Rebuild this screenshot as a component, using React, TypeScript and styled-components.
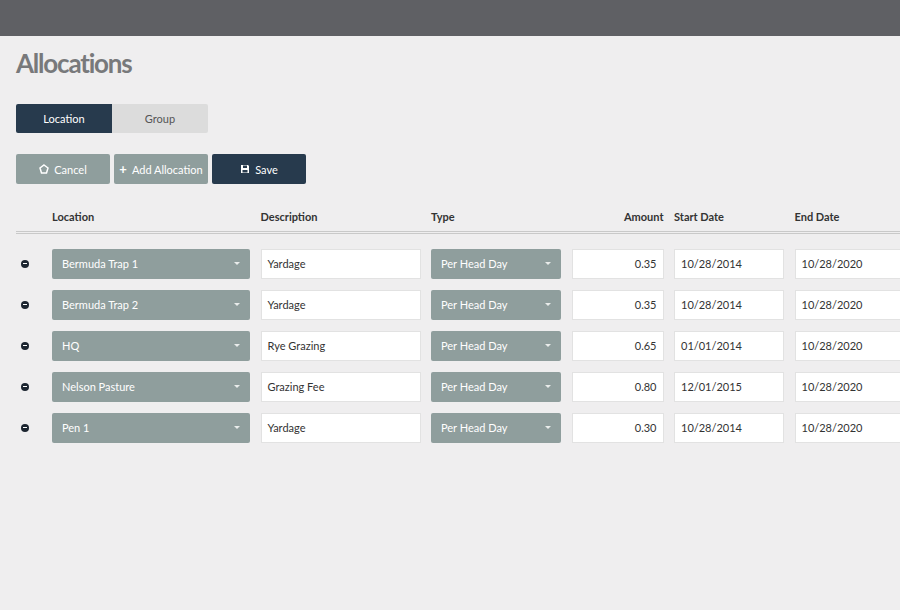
import styled, { createGlobalStyle } from 'styled-components';

const Global = createGlobalStyle`
  body { margin: 0; background: #efeeef; font-family: Lato, "Open Sans", sans-serif; overflow: hidden; }
`;

const rows = [
  { loc: 'Bermuda Trap 1', desc: 'Yardage', amt: '0.35', start: '10/28/2014', end: '10/28/2020' },
  { loc: 'Bermuda Trap 2', desc: 'Yardage', amt: '0.35', start: '10/28/2014', end: '10/28/2020' },
  { loc: 'HQ', desc: 'Rye Grazing', amt: '0.65', start: '01/01/2014', end: '10/28/2020' },
  { loc: 'Nelson Pasture', desc: 'Grazing Fee', amt: '0.80', start: '12/01/2015', end: '10/28/2020' },
  { loc: 'Pen 1', desc: 'Yardage', amt: '0.30', start: '10/28/2014', end: '10/28/2020' },
];

const TopBar = styled.div`height: 36px; background: #5f6064;`;
const Page = styled.div`padding: 0 0 0 16px; width: 920px;`;
const Title = styled.h1`
  margin: 0; padding-top: 11px; height: 57px; box-sizing: border-box;
  font-size: 26px; font-weight: 700; color: #78797b; letter-spacing: -1.2px;
`;
const Tabs = styled.div`display: flex; margin-top: 11px;`;
const Tab = styled.div<{ $active?: boolean }>`
  width: 96px; height: 29px; display: flex; align-items: center; justify-content: center;
  font-size: 11px; background: ${p => (p.$active ? '#273a4d' : '#dcdcdc')};
  color: ${p => (p.$active ? '#fff' : '#555')};
  border-radius: ${p => (p.$active ? '2px 0 0 2px' : '0 2px 2px 0')};
`;
const Actions = styled.div`display: flex; gap: 4px; margin-top: 21px;`;
const Btn = styled.div<{ $dark?: boolean; $w: number }>`
  width: ${p => p.$w}px; height: 30px; display: flex; align-items: center; justify-content: center; gap: 5px;
  font-size: 11px; color: #fff; border-radius: 2px;
  background: ${p => (p.$dark ? '#273a4d' : '#8f9e9d')};
`;
const Grid = styled.div`
  display: grid; margin-top: 26px;
  grid-template-columns: 25.5px 198px 160px 130px 92px 110px 110px;
  column-gap: 10.5px; align-items: center;
`;
const Head = styled.div<{ $right?: boolean }>`
  font-size: 11px; font-weight: 700; color: #333; height: 14px; padding-bottom: 7px;
  text-align: ${p => (p.$right ? 'right' : 'left')};
`;
const Rule = styled.div`
  grid-column: 1 / -1; height: 1px; border-top: 1px solid #c9c9c9; border-bottom: 1px solid #c9c9c9;
  margin-bottom: 9px; margin-right: -40px;
`;
const Minus = styled.div`
  width: 8px; height: 8px; border-radius: 50%; background: #1c2530; margin-left: 5px; position: relative;
  &::after { content: ''; position: absolute; left: 2px; right: 2px; top: 3.5px; height: 1px; background: #fff; }
`;
const Select = styled.div`
  height: 30px; margin: 5.5px 0; background: #8f9e9d; border-radius: 2px; color: #fff;
  font-size: 11px; display: flex; align-items: center; justify-content: space-between; padding: 0 10px;
  &::after { content: ''; border-left: 3px solid transparent; border-right: 3px solid transparent; border-top: 3px solid #fff; opacity: .8; }
`;
const Field = styled.div<{ $right?: boolean }>`
  height: 28px; background: #fff; border: 1px solid #e2e2e2; font-size: 11px; color: #333;
  display: flex; align-items: center; padding: 0 6px;
  justify-content: ${p => (p.$right ? 'flex-end' : 'flex-start')};
`;

export default function App() {
  return (
    <>
      <Global />
      <TopBar />
      <Page>
        <Title>Allocations</Title>
        <Tabs><Tab $active>Location</Tab><Tab>Group</Tab></Tabs>
        <Actions>
          <Btn $w={94}>
            <svg width="10" height="10" viewBox="0 0 10 10"><path d="M5 1 L9 4 L7.5 9 L2.5 9 L1 4 Z" fill="none" stroke="#fff" strokeWidth="1.5"/></svg>
            Cancel
          </Btn>
          <Btn $w={94}><span style={{ fontWeight: 700, fontSize: 13 }}>+</span>Add Allocation</Btn>
          <Btn $w={94} $dark>
            <svg width="10" height="10" viewBox="0 0 10 10"><path d="M1 1h7l1 1v7H1z" fill="#fff"/><rect x="3" y="1.5" width="4" height="2.5" fill="#273a4d"/><rect x="2.5" y="6" width="5" height="2.5" fill="#273a4d"/></svg>
            Save
          </Btn>
        </Actions>
        <Grid>
          <div />
          <Head>Location</Head><Head>Description</Head><Head>Type</Head>
          <Head $right>Amount</Head><Head>Start Date</Head><Head>End Date</Head>
          <Rule />
          {rows.map(r => (
            <>
              <Minus key={r.loc + 'm'} />
              <Select>{r.loc}</Select>
              <Field>{r.desc}</Field>
              <Select>Per Head Day</Select>
              <Field $right>{r.amt}</Field>
              <Field>{r.start}</Field>
              <Field>{r.end}</Field>
            </>
          ))}
        </Grid>
      </Page>
    </>
  );
}
